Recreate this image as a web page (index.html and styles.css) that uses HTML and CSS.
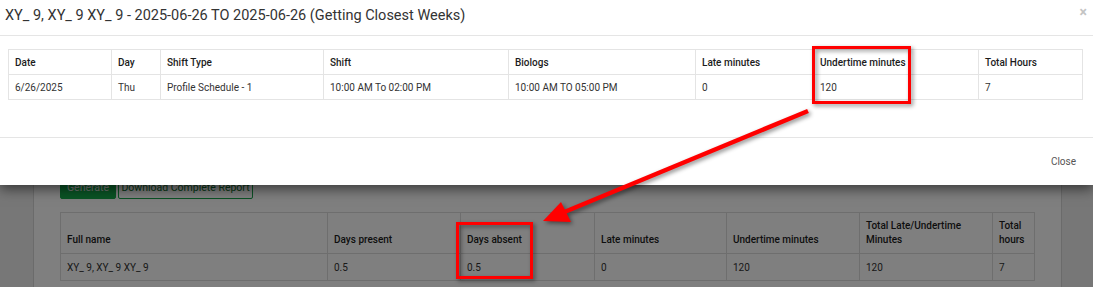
FILE: index.html
```html
<!DOCTYPE html>
<html lang="en">
<head>
  <meta charset="UTF-8" />
  <title>Attendance Summary</title>
  <link rel="stylesheet" href="styles.css">
</head>
<body>
  <div class="page">
    <div class="panel">
      <div class="actions">
        <button class="btn btn-green">Generate</button>
        <button class="btn btn-outline">Download Complete Report</button>
      </div>
      <table class="report">
        <colgroup>
          <col style="width:267px"><col style="width:133px"><col style="width:134px"><col style="width:132px">
          <col style="width:133px"><col style="width:133px"><col style="width:42px">
        </colgroup>
        <thead>
          <tr>
            <th>Full name</th>
            <th>Days present</th>
            <th>Days absent</th>
            <th>Late minutes</th>
            <th>Undertime minutes</th>
            <th>Total Late/Undertime Minutes</th>
            <th>Total hours</th>
          </tr>
        </thead>
        <tbody>
          <tr>
            <td>XY_ 9, XY_ 9 XY_ 9</td>
            <td>0.5</td>
            <td>0.5</td>
            <td>0</td>
            <td>120</td>
            <td>120</td>
            <td>7</td>
          </tr>
        </tbody>
      </table>
    </div>
  </div>

  <div class="backdrop"></div>

  <div class="modal">
    <div class="modal-header">
      <h4>XY_ 9, XY_ 9 XY_ 9 - 2025-06-26 TO 2025-06-26 (Getting Closest Weeks)</h4>
      <span class="close-x">&times;</span>
    </div>
    <div class="modal-body">
      <table class="detail">
        <colgroup>
          <col style="width:103px"><col style="width:49px"><col style="width:163px"><col style="width:185px">
          <col style="width:187px"><col style="width:118px"><col style="width:165px"><col>
        </colgroup>
        <thead>
          <tr>
            <th>Date</th>
            <th>Day</th>
            <th>Shift Type</th>
            <th>Shift</th>
            <th>Biologs</th>
            <th>Late minutes</th>
            <th>Undertime minutes</th>
            <th>Total Hours</th>
          </tr>
        </thead>
        <tbody>
          <tr>
            <td>6/26/2025</td>
            <td>Thu</td>
            <td>Profile Schedule - 1</td>
            <td>10:00 AM To 02:00 PM</td>
            <td>10:00 AM TO 05:00 PM</td>
            <td>0</td>
            <td>120</td>
            <td>7</td>
          </tr>
        </tbody>
      </table>
    </div>
    <div class="modal-footer">
      <button class="btn-link">Close</button>
    </div>
  </div>

  <!-- annotations -->
  <div class="mark mark-top"></div>
  <div class="mark mark-bottom"></div>
  <svg class="arrow" width="1093" height="287" viewBox="0 0 1093 287">
    <line x1="808" y1="111" x2="562" y2="213" stroke="#ff0000" stroke-width="4.5" />
    <polygon points="543,221 561,202 571,222" fill="#ff0000" />
  </svg>
</body>
</html>
```

FILE: styles.css
```css
html, body {
  margin: 0;
  padding: 0;
}
body {
  width: 1093px;
  height: 287px;
  overflow: hidden;
  position: relative;
  font-family: Roboto, "Noto Sans", sans-serif;
  color: #333;
}
.page {
  background: #eeeeee;
  height: 287px;
  overflow: hidden;
}
.panel {
  margin-left: 33px;
  width: 1029px;
  height: 287px;
  background: #ffffff;
  border-left: 1px solid #d6d6d6;
  border-right: 1px solid #d6d6d6;
  padding: 175px 26px 0 26px;
  box-sizing: border-box;
}
.actions {
  display: flex;
  gap: 2px;
  height: 24px;
}
.btn {
  font-family: inherit;
  font-size: 10.5px;
  border-radius: 2px;
  padding: 0;
  height: 24px;
  white-space: nowrap;
}
.btn-green {
  background: #14a84a;
  color: #e8e8e8;
  border: 1px solid #14a84a;
  width: 56px;
}
.btn-outline {
  background: #fff;
  color: #0d6e2e;
  border: 1px solid #17a34b;
  width: 135px;
}
.report {
  margin-top: 13px;
  width: 974px;
  table-layout: fixed;
  border-collapse: collapse;
  font-size: 10px;
}
.report th, .report td {
  border: 1px solid #dcdcdc;
  text-align: left;
  padding: 0 6px;
}
.report th {
  vertical-align: bottom;
  font-weight: 500;
  color: #1c1c1c;
  line-height: 14px;
  height: 41px;
  padding-bottom: 6px;
  box-sizing: border-box;
}
.report td {
  height: 26px;
  color: #333;
}
.backdrop {
  position: absolute;
  inset: 0;
  background: rgba(0, 0, 0, 0.5);
}
.modal {
  position: absolute;
  top: 0;
  left: 0;
  width: 1093px;
  height: 185px;
  background: #fff;
  box-shadow: 0 4px 12px rgba(0, 0, 0, 0.55);
  display: flex;
  flex-direction: column;
}
.modal-header {
  height: 35px;
  border-bottom: 1px solid #e5e5e5;
  display: flex;
  align-items: center;
  justify-content: space-between;
  padding: 0 6px 0 5px;
}
.modal-header h4 {
  margin: 0;
  font-size: 14.5px;
  font-weight: 400;
  color: #333;
  padding-bottom: 4px;
}
.close-x {
  color: #c4c4c4;
  font-size: 14px;
  font-weight: 700;
  margin-top: -12px;
}
.modal-body {
  height: 101px;
  padding: 13px 10px 0 8px;
  box-sizing: border-box;
}
.detail {
  width: 100%;
  table-layout: fixed;
  border-collapse: collapse;
  font-size: 10px;
}
.detail th, .detail td {
  border: 1px solid #e4e4e4;
  text-align: left;
  padding: 0 6px;
  height: 25px;
  box-sizing: border-box;
}
.detail th {
  font-weight: 500;
  color: #1c1c1c;
}
.detail td {
  color: #333;
}
.modal-footer {
  flex: 1;
  border-top: 1px solid #e5e5e5;
  display: flex;
  align-items: center;
  justify-content: flex-end;
  padding-right: 17px;
}
.btn-link {
  background: none;
  border: none;
  font-family: inherit;
  font-size: 10px;
  color: #555;
  padding: 0;
}
.mark {
  position: absolute;
  border: 3px solid #ff0000;
  box-sizing: border-box;
  filter: drop-shadow(2px 2px 2px rgba(0, 0, 0, 0.45));
}
.mark-top {
  left: 812px;
  top: 46px;
  width: 99px;
  height: 58px;
}
.mark-bottom {
  left: 456px;
  top: 222px;
  width: 77px;
  height: 57px;
}
.arrow {
  position: absolute;
  left: 0;
  top: 0;
  pointer-events: none;
  filter: drop-shadow(2px 2px 2px rgba(0, 0, 0, 0.45));
}
```
